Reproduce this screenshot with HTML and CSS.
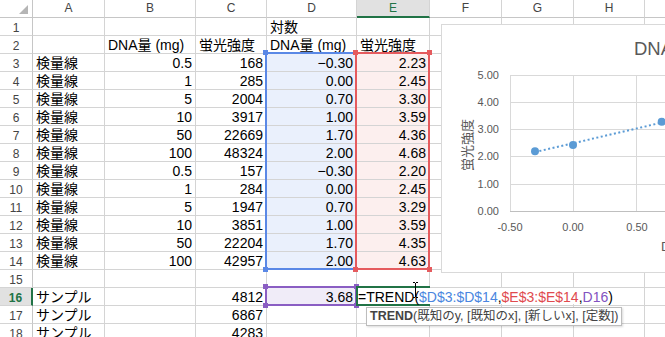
FILE: index.html
```html
<!DOCTYPE html>
<html lang="ja">
<head>
    <meta charset="UTF-8">
    <meta name="viewport" content="width=device-width, initial-scale=1.0">
    <title>検量線 - TREND</title>
    <link rel="stylesheet" href="styles.css">
</head>
<body>
    <div class="sheet">
        <!-- 列見出し -->
        <div class="corner"><span class="all"></span></div>
        <div class="col">A</div><div class="col">B</div><div class="col">C</div><div class="col">D</div>
        <div class="col on">E</div><div class="col">F</div><div class="col">G</div><div class="col">H</div><div class="col">I</div>

        <div class="rh">1</div><div></div><div></div><div></div><div>対数</div><div></div><div></div><div></div><div></div><div></div>
        <div class="rh">2</div><div></div><div>DNA量 (mg)</div><div>蛍光強度</div><div>DNA量 (mg)</div><div>蛍光強度</div><div></div><div></div><div></div><div></div>

        <!-- 検量線 -->
        <div class="rh">3</div><div>検量線</div><div class="n">0.5</div><div class="n">168</div><div class="n d">−0.30</div><div class="n e">2.23</div><div></div><div></div><div></div><div></div>
        <div class="rh">4</div><div>検量線</div><div class="n">1</div><div class="n">285</div><div class="n d">0.00</div><div class="n e">2.45</div><div></div><div></div><div></div><div></div>
        <div class="rh">5</div><div>検量線</div><div class="n">5</div><div class="n">2004</div><div class="n d">0.70</div><div class="n e">3.30</div><div></div><div></div><div></div><div></div>
        <div class="rh">6</div><div>検量線</div><div class="n">10</div><div class="n">3917</div><div class="n d">1.00</div><div class="n e">3.59</div><div></div><div></div><div></div><div></div>
        <div class="rh">7</div><div>検量線</div><div class="n">50</div><div class="n">22669</div><div class="n d">1.70</div><div class="n e">4.36</div><div></div><div></div><div></div><div></div>
        <div class="rh">8</div><div>検量線</div><div class="n">100</div><div class="n">48324</div><div class="n d">2.00</div><div class="n e">4.68</div><div></div><div></div><div></div><div></div>
        <div class="rh">9</div><div>検量線</div><div class="n">0.5</div><div class="n">157</div><div class="n d">−0.30</div><div class="n e">2.20</div><div></div><div></div><div></div><div></div>
        <div class="rh">10</div><div>検量線</div><div class="n">1</div><div class="n">284</div><div class="n d">0.00</div><div class="n e">2.45</div><div></div><div></div><div></div><div></div>
        <div class="rh">11</div><div>検量線</div><div class="n">5</div><div class="n">1947</div><div class="n d">0.70</div><div class="n e">3.29</div><div></div><div></div><div></div><div></div>
        <div class="rh">12</div><div>検量線</div><div class="n">10</div><div class="n">3851</div><div class="n d">1.00</div><div class="n e">3.59</div><div></div><div></div><div></div><div></div>
        <div class="rh">13</div><div>検量線</div><div class="n">50</div><div class="n">22204</div><div class="n d">1.70</div><div class="n e">4.35</div><div></div><div></div><div></div><div></div>
        <div class="rh">14</div><div>検量線</div><div class="n">100</div><div class="n">42957</div><div class="n d">2.00</div><div class="n e">4.63</div><div></div><div></div><div></div><div></div>

        <div class="rh">15</div><div></div><div></div><div></div><div></div><div></div><div></div><div></div><div></div><div></div>

        <!-- サンプル -->
        <div class="rh on">16</div><div>サンプル</div><div></div><div class="n">4812</div><div class="n p">3.68</div><div></div><div></div><div></div><div></div><div></div>
        <div class="rh">17</div><div>サンプル</div><div></div><div class="n">6867</div><div></div><div></div><div></div><div></div><div></div><div></div>
        <div class="rh">18</div><div>サンプル</div><div></div><div class="n">4283</div><div></div><div></div><div></div><div></div><div></div><div></div>
    </div>

    <!-- 参照範囲の枠 -->
    <div class="range blue"><i class="tl"></i><i class="bl"></i></div>
    <div class="range red"><i class="tl"></i><i class="tr"></i><i class="bl"></i><i class="br"></i></div>
    <div class="range purple"><i class="tl"></i><i class="tr"></i><i class="bl"></i><i class="br"></i></div>
    <div class="range active"></div>

    <div class="editor">=TREND(<span class="ref-d">$D$3:$D$14</span>,<span class="ref-e">$E$3:$E$14</span>,<span class="ref-p">D16</span>)</div>
    <svg class="ibeam" width="7" height="16" viewBox="0 0 7 16">
        <path d="M1 0.5h2M4 0.5h2M3.5 1v14M1 15.5h2M4 15.5h2" stroke="#000" stroke-width="1" fill="none"/>
    </svg>

    <div class="tip"><b>TREND</b>(既知のy, [既知のx], [新しいx], [定数])</div>

    <!-- グラフ -->
    <div class="chart">
        <svg width="258" height="247" viewBox="0 0 258 247">
            <g stroke="#d9d9d9" stroke-width="1">
                <line x1="68" y1="50.5" x2="258" y2="50.5"/>
                <line x1="68" y1="77.5" x2="258" y2="77.5"/>
                <line x1="68" y1="104.5" x2="258" y2="104.5"/>
                <line x1="68" y1="131.5" x2="258" y2="131.5"/>
                <line x1="68" y1="159.5" x2="258" y2="159.5"/>
                <line x1="131.5" y1="50" x2="131.5" y2="187"/>
                <line x1="194.5" y1="50" x2="194.5" y2="187"/>
                <line x1="68.5" y1="50" x2="68.5" y2="187"/>
            </g>
            <line x1="68" y1="186.5" x2="258" y2="186.5" stroke="#bfbfbf"/>

            <g class="tick" text-anchor="end">
                <text x="57" y="53.5">5.00</text>
                <text x="57" y="80.5">4.00</text>
                <text x="57" y="107.5">3.00</text>
                <text x="57" y="135">2.00</text>
                <text x="57" y="162.5">1.00</text>
                <text x="57" y="190">0.00</text>
            </g>
            <g class="tick" text-anchor="middle">
                <text x="68" y="206">-0.50</text>
                <text x="131" y="206">0.00</text>
                <text x="195" y="206">0.50</text>
            </g>

            <line x1="93" y1="127.1" x2="384.4" y2="59.3" stroke="#5b9bd5" stroke-width="2" stroke-dasharray="2 2.5"/>
            <g fill="#5b9bd5">
                <circle cx="93" cy="126.3" r="4"/>
                <circle cx="131" cy="119.9" r="4"/>
                <circle cx="219.7" cy="96.8" r="4"/>
            </g>

            <text class="title" x="192" y="30">DNA量と蛍光強度</text>
            <text class="axis-title" transform="translate(29.5,120) rotate(-90)" text-anchor="middle">蛍光強度</text>
            <text class="axis-title" x="219" y="226">DNA量 (mg)</text>
        </svg>
    </div>
</body>
</html>
```

FILE: styles.css
```css
* {
    margin: 0;
    padding: 0;
    box-sizing: border-box;
}

body {
    font-family: "Liberation Sans", "Noto Sans CJK JP", sans-serif;
    background: #fff;
    color: #000;
    width: 665px;
    height: 337px;
    overflow: hidden;
    position: relative;
}

/* シート */
.sheet {
    display: grid;
    grid-template-columns: 33px 72px 91px 71px 90px 73px 72px 72px 71px 60px;
    grid-template-rows: 18px;
    grid-auto-rows: 18px;
    width: max-content;
}

.sheet div {
    border-right: 1px solid #d4d4d4;
    border-bottom: 1px solid #d4d4d4;
    padding: 0 3px;
    font-size: 14px;
    line-height: 19px;
    white-space: nowrap;
}

.sheet .n {
    text-align: right;
}

.sheet .d {
    background: #eaf0fc;
}

.sheet .e {
    background: #fcefee;
}

.sheet .p {
    background: #f0ecf8;
}

.sheet .corner {
    position: relative;
    border-bottom-color: #c6c6c6;
    border-right-color: #c6c6c6;
}

.corner .all {
    position: absolute;
    right: 4px;
    bottom: 3px;
    width: 0;
    height: 0;
    border-left: 9px solid transparent;
    border-bottom: 9px solid #b5b5b5;
}

.sheet .col {
    font-size: 12px;
    line-height: 16px;
    text-align: center;
    color: #444;
    border-bottom-color: #c6c6c6;
}

.sheet .col.on {
    background: #e1e1e1;
    color: #217346;
    border-bottom: 2px solid #217346;
}

.sheet .rh {
    font-size: 12px;
    line-height: 20px;
    text-align: center;
    color: #444;
    padding: 0;
    border-right-color: #c6c6c6;
}

.sheet .rh.on {
    background: #e1e1e1;
    color: #217346;
    font-weight: bold;
    border-right: 2px solid #217346;
}

/* 参照範囲 */
.range {
    position: absolute;
    border: 2px solid;
}

.range i {
    position: absolute;
    width: 5px;
    height: 5px;
    background: currentColor;
}

.range .tl { left: -4px; top: -4px; }
.range .tr { right: -4px; top: -4px; }
.range .bl { left: -4px; bottom: -4px; }
.range .br { right: -4px; bottom: -4px; }

.range.blue {
    left: 265px;
    top: 52px;
    width: 92px;
    height: 218px;
    color: #5a88e6;
}

.range.red {
    left: 355px;
    top: 52px;
    width: 75px;
    height: 218px;
    color: #e55b5e;
}

.range.purple {
    left: 265px;
    top: 286px;
    width: 92px;
    height: 20px;
    color: #8a5ec3;
}

.range.active {
    left: 356px;
    top: 286px;
    width: 74px;
    height: 20px;
    color: #217346;
    border-right: none;
}

/* 数式入力 */
.editor {
    position: absolute;
    left: 358px;
    top: 288px;
    height: 16px;
    padding-right: 3px;
    background: #fff;
    font-size: 14px;
    line-height: 19px;
    white-space: nowrap;
}

.ref-d { color: #4a86e0; }
.ref-e { color: #e04a4e; }
.ref-p { color: #8252c0; }

.ibeam {
    position: absolute;
    left: 412px;
    top: 282px;
}

.tip {
    position: absolute;
    left: 366px;
    top: 307px;
    height: 19px;
    padding: 0 3px;
    background: #fff;
    border: 1px solid #bdbdbd;
    box-shadow: 1px 1px 2px rgba(0,0,0,0.15);
    font-size: 12.5px;
    line-height: 17px;
    color: #444;
    white-space: nowrap;
}

/* グラフ */
.chart {
    position: absolute;
    left: 441px;
    top: 24px;
    width: 260px;
    height: 249px;
    background: #fff;
    border: 1px solid #d9d9d9;
}

.chart svg {
    display: block;
}

.chart text {
    font-family: "Liberation Sans", "Noto Sans CJK JP", sans-serif;
    fill: #595959;
}

.chart .tick {
    font-size: 11px;
}

.chart .title {
    font-size: 18.5px;
}

.chart .axis-title {
    font-size: 13px;
}
```
